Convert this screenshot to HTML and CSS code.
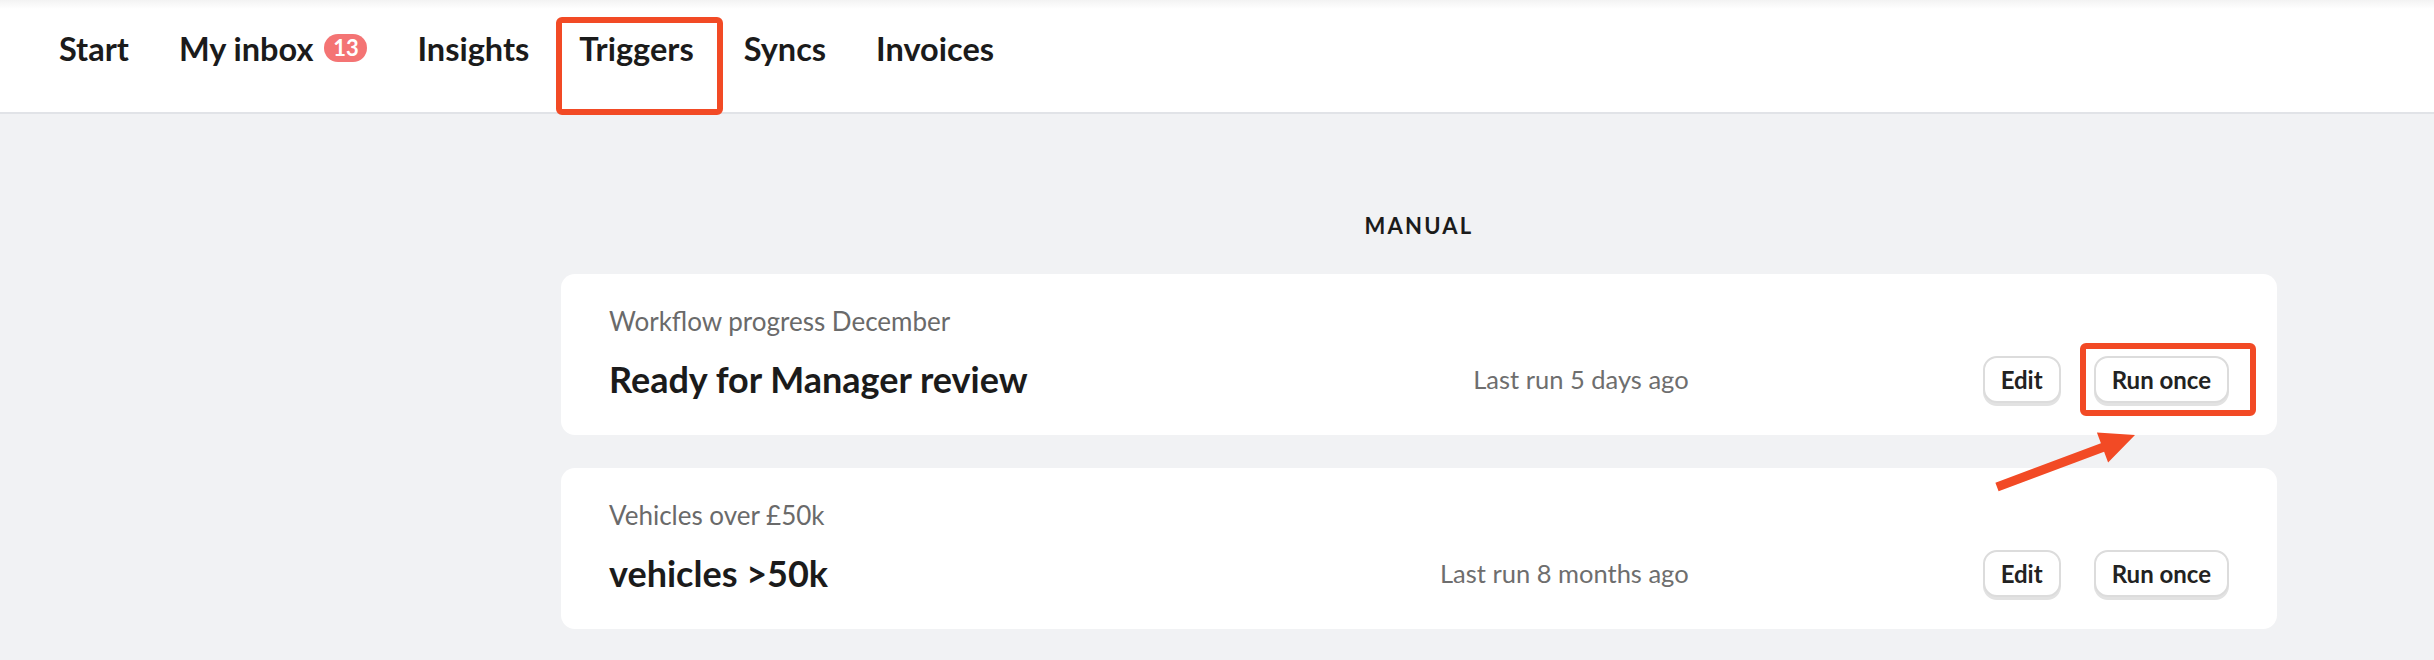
FILE: index.html
```html
<!DOCTYPE html>
<html lang="en">
<head>
<meta charset="utf-8">
<title>Triggers</title>
<link rel="stylesheet" href="styles.css">
</head>
<body>
<header class="topbar">
  <nav class="nav">
    <a class="nav-item">Start</a>
    <a class="nav-item">My inbox <span class="badge">13</span></a>
    <a class="nav-item">Insights</a>
    <a class="nav-item">Triggers</a>
    <a class="nav-item">Syncs</a>
    <a class="nav-item">Invoices</a>
  </nav>
  <span class="highlight highlight-tab"></span>
</header>

<main class="content">
  <h2 class="section-title">MANUAL</h2>

  <section class="trigger-card">
    <div class="trigger-sub">Workflow progress December</div>
    <div class="trigger-row">
      <div class="trigger-name">Ready for Manager review</div>
      <div class="trigger-last">Last run 5 days ago</div>
      <div class="trigger-actions">
        <button class="btn">Edit</button>
        <button class="btn">Run once</button>
      </div>
    </div>
    <span class="highlight highlight-run"></span>
  </section>

  <section class="trigger-card">
    <div class="trigger-sub">Vehicles over £50k</div>
    <div class="trigger-row">
      <div class="trigger-name">vehicles &gt;50k</div>
      <div class="trigger-last">Last run 8 months ago</div>
      <div class="trigger-actions">
        <button class="btn">Edit</button>
        <button class="btn">Run once</button>
      </div>
    </div>
  </section>
</main>

<svg class="annotation-arrow" viewBox="1990 425 150 72" width="150" height="72" aria-hidden="true">
  <polygon points="1995.4,482.8 2100.9,443.3 2096.9,432.5 2135,435 2108.1,462.5 2104.1,451.7 1998.6,491.2" fill="#f24a25"/>
</svg>
</body>
</html>
```

FILE: styles.css
```css
* { box-sizing: border-box; }

body {
  margin: 0;
  background: #f1f2f4;
  font-family: "Lato", "Liberation Sans", sans-serif;
  color: #1b1b1b;
  position: relative;
  min-height: 660px;
}

.topbar {
  position: relative;
  height: 114px;
  background: linear-gradient(#f3f3f3 0, #ffffff 9px);
  border-bottom: 2px solid #e1e3e7;
  padding: 30px 0 0 59px;
}

.nav {
  display: flex;
  align-items: flex-start;
  gap: 50px;
}

.nav-item {
  display: flex;
  align-items: center;
  font-size: 32.5px;
  font-weight: 700;
  line-height: 38px;
  color: #1b1b1b;
  text-decoration: none;
}

.badge {
  display: inline-flex;
  align-items: center;
  justify-content: center;
  height: 28px;
  min-width: 43px;
  padding: 0 8px;
  margin-left: 11px;
  margin-top: -3px;
  border-radius: 14px;
  background: #f47474;
  color: #fff;
  font-size: 22px;
  font-weight: 700;
  line-height: 1;
}

.highlight {
  position: absolute;
  border: 6px solid #f24a25;
  border-radius: 6px;
  pointer-events: none;
}

.highlight-tab {
  left: 556px;
  top: 17px;
  width: 167px;
  height: 98px;
}

.content {
  width: 2277px;
  padding: 0 0 0 561px;
}

.section-title {
  margin: 99px 0 35px;
  text-align: center;
  font-size: 22px;
  font-weight: 700;
  letter-spacing: 2.2px;
  line-height: 26px;
  color: #1b1b1b;
}

.trigger-card {
  position: relative;
  background: #fff;
  border-radius: 14px;
  padding: 32px 48px;
  margin-bottom: 33px;
}

.trigger-sub {
  font-size: 26px;
  line-height: 31px;
  color: #6a6a6a;
  margin-bottom: 19px;
}

.trigger-row {
  display: flex;
  align-items: center;
  height: 47px;
}

.trigger-name {
  flex: 1;
  font-size: 36px;
  font-weight: 700;
  line-height: 43px;
  color: #1b1b1b;
}

.trigger-last {
  font-size: 25.5px;
  line-height: 31px;
  color: #6e6e6e;
}

.trigger-actions {
  display: flex;
  gap: 33px;
  margin-left: 294px;
}

.btn {
  height: 47px;
  padding: 0 16px;
  border: 2px solid #dcdcdc;
  border-radius: 14px;
  background: #fff;
  box-shadow: 0 3px 0 #e2e2e2;
  font-family: "Lato", "Liberation Sans", sans-serif;
  font-size: 24px;
  font-weight: 700;
  color: #222;
}

.highlight-run {
  left: 1519px;
  top: 69px;
  width: 176px;
  height: 73px;
}

.annotation-arrow {
  position: absolute;
  left: 1990px;
  top: 425px;
}
```
